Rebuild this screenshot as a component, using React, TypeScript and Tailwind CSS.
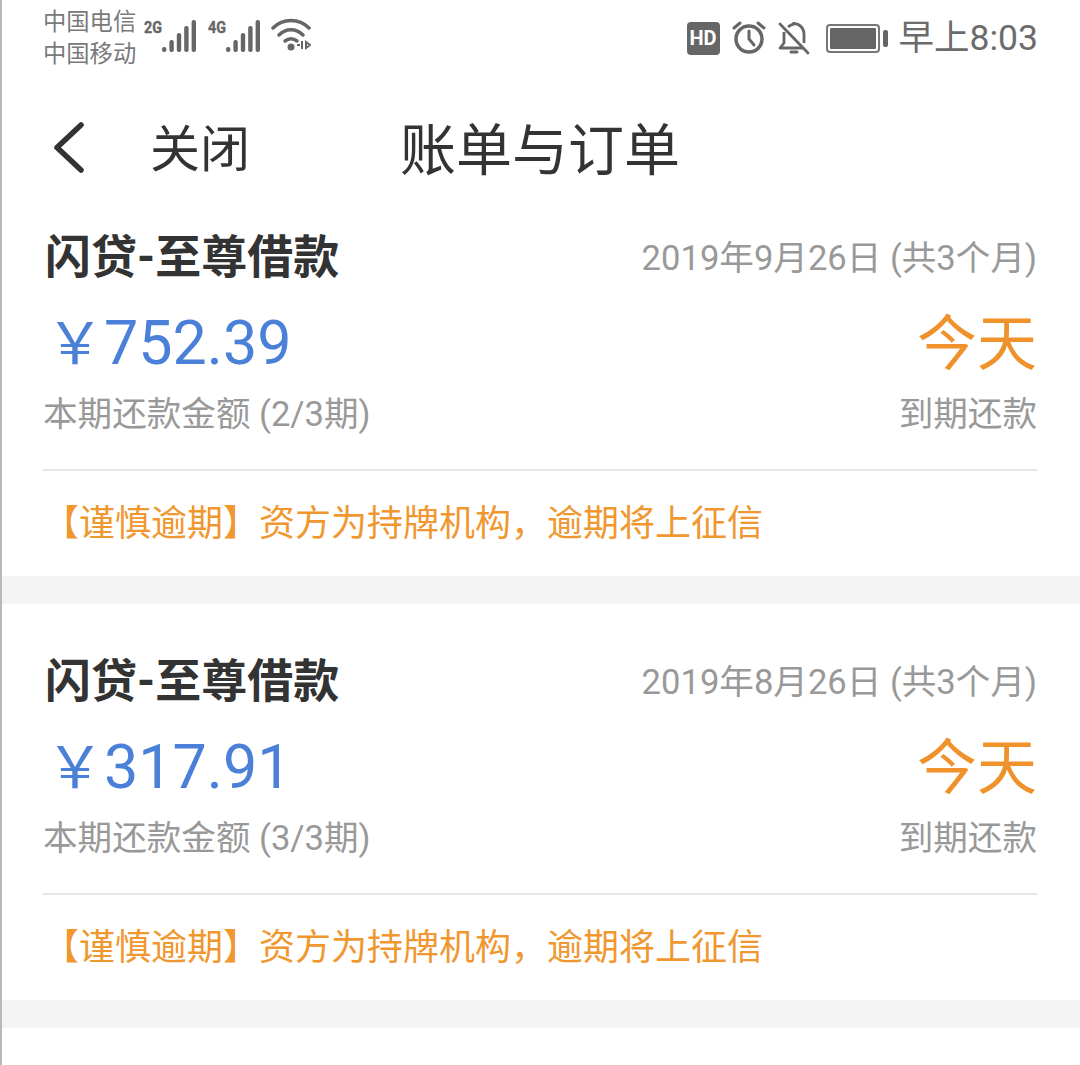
const font = { cn: "font-['Roboto','Noto_Sans_CJK_SC',sans-serif]" };

function Signal({ label }: { label: string }) {
  const heights = [5, 12, 19, 26, 32];
  return (
    <svg width="54" height="36" viewBox="0 0 54 36" className="block">
      <text x="0" y="15" fontSize="17" fontWeight="700" fontFamily="Roboto, sans-serif" fill="#666" stroke="#666" strokeWidth="0.4" textLength="18" lengthAdjust="spacingAndGlyphs">
        {label}
      </text>
      {heights.map((h, i) => (
        <rect key={i} x={18 + i * 7.4} y={34 - h} width="4.4" height={h} rx="2" fill="#666" />
      ))}
    </svg>
  );
}

function Wifi() {
  return (
    <svg width="40" height="36" viewBox="0 0 40 36" fill="none" className="block">
      <path d="M2 10C12 0 28 0 38 10" stroke="#666" strokeWidth="3.5" strokeLinecap="round" />
      <path d="M8 17C15 10 25 10 32 17" stroke="#666" strokeWidth="3.5" strokeLinecap="round" />
      <path d="M14 23C18 20 22 20 26 23" stroke="#666" strokeWidth="3.5" strokeLinecap="round" />
      <circle cx="20" cy="29" r="3.5" fill="#666" />
      <path d="M31 23V31M29 27L26 27M35 24L39 27L35 30Z" stroke="#666" strokeWidth="2" />
    </svg>
  );
}

function Alarm() {
  return (
    <svg width="34" height="34" viewBox="0 0 34 34" fill="none" className="block">
      <circle cx="17" cy="18" r="13" stroke="#666" strokeWidth="3.5" />
      <path d="M17 10V18L22 24" stroke="#666" strokeWidth="3" strokeLinecap="round" />
      <path d="M2 7L8 2M32 7L26 2" stroke="#666" strokeWidth="3" strokeLinecap="round" />
    </svg>
  );
}

function BellOff() {
  return (
    <svg width="32" height="34" viewBox="0 0 32 34" fill="none" className="block">
      <path d="M6 11V22L2 27H25" stroke="#666" strokeWidth="2.8" strokeLinejoin="round" />
      <path d="M10 6C13 3 18 2 21 4C24 6 26 9 26 13V22" stroke="#666" strokeWidth="2.8" />
      <path d="M13 31H19" stroke="#666" strokeWidth="3" strokeLinecap="round" />
      <path d="M16 1V3" stroke="#666" strokeWidth="3" />
      <path d="M2 3L30 32" stroke="#666" strokeWidth="2.8" strokeLinecap="round" />
    </svg>
  );
}

function Battery() {
  return (
    <div className="flex items-center gap-[3px]">
      <div className="h-[29px] w-[54px] rounded-[4px] border-2 border-[#777] p-[2px]">
        <div className="h-full w-full rounded-[1px] bg-[#666]" />
      </div>
      <div className="h-[17px] w-[5px] rounded-[2px] bg-[#666]" />
    </div>
  );
}

function StatusBar() {
  return (
    <div className="flex h-[73px] items-start justify-between pl-[41px] pr-[42px] pt-[6px]">
      <div className="flex items-start">
        <div className={`${font.cn} text-[23.3px] leading-[32px] text-[#7a7a7a]`}>
          <div>中国电信</div>
          <div>中国移动</div>
        </div>
        <div className="ml-[8px] mt-[12px] flex items-start">
          <Signal label="2G" />
          <div className="ml-[10px]">
            <Signal label="4G" />
          </div>
          <div className="ml-[9px]">
            <Wifi />
          </div>
        </div>
      </div>
      <div className="mt-[14px] flex items-center">
        <div className="flex h-[33px] w-[33px] items-center justify-center rounded-[4px] bg-[#666] font-['Roboto',sans-serif] text-[20px] font-bold text-white">
          HD
        </div>
        <div className="ml-[12px]">
          <Alarm />
        </div>
        <div className="ml-[12px]">
          <BellOff />
        </div>
        <div className="ml-[16px]">
          <Battery />
        </div>
        <div className={`${font.cn} ml-[11px] text-[35.5px] leading-[36px] text-[#6b6b6b]`}>早上8:03</div>
      </div>
    </div>
  );
}

function Header() {
  return (
    <div className="flex h-[142px] items-start pl-[50px]">
      <div className="mt-[49px] w-[98px]">
        <svg width="34" height="52" viewBox="0 0 34 52" fill="none" className="block">
          <path d="M29 3L5 25.5L29 48" stroke="#333" strokeWidth="5.5" strokeLinecap="round" strokeLinejoin="round" />
        </svg>
      </div>
      <div className={`${font.cn} mt-[51px] w-[250px] text-[50px] leading-[52px] text-[#333]`}>关闭</div>
      <div className={`${font.cn} mt-[48px] text-[56px] leading-[60px] text-[#333]`}>账单与订单</div>
    </div>
  );
}

function BillCard({ date, amount, term }: { date: string; amount: string; term: string }) {
  return (
    <div className="pl-[41px] pr-[43px]">
      <div className="flex h-[84px] items-center justify-between pl-[2px]">
        <div className={`${font.cn} text-[46px] font-bold leading-[56px] text-[#333]`}>闪贷-至尊借款</div>
        <div className={`${font.cn} mt-[1px] text-[34.6px] leading-[44px] text-[#999]`}>{date}</div>
      </div>
      <div className="flex h-[84px] items-center justify-between">
        <div className="flex items-baseline pl-[3px] text-[#4a80d8]">
          <span className="w-[58px] font-['Noto_Sans_CJK_SC',sans-serif] text-[58px] leading-[70px]">￥</span>
          <span className="font-['Roboto',sans-serif] text-[61px] leading-[70px]">{amount}</span>
        </div>
        <div className={`${font.cn} mt-[8px] text-[60px] leading-[70px] text-[#f0922b]`}>今天</div>
      </div>
      <div className="flex h-[62px] items-center justify-between">
        <div className={`${font.cn} text-[34.6px] leading-[44px] text-[#999]`}>本期还款金额 ({term}期)</div>
        <div className={`${font.cn} text-[34.6px] leading-[44px] text-[#999]`}>到期还款</div>
      </div>
      <div className="mt-[24px] mb-[1px] h-[2px] bg-[#e6e6e6]" />
      <div className={`${font.cn} flex h-[104px] items-center text-[36px] leading-[44px] text-[#f0972f]`}>
        【谨慎逾期】资方为持牌机构，逾期将上征信
      </div>
    </div>
  );
}

export default function App() {
  return (
    <div className="h-[1065px] w-[1080px] overflow-hidden border-l-2 border-[#b8b8b8] bg-white">
      <StatusBar />
      <Header />
      <BillCard date="2019年9月26日 (共3个月)" amount="752.39" term="2/3" />
      <div className="h-[28px] bg-[#f4f4f4]" />
      <div className="h-[35px]" />
      <BillCard date="2019年8月26日 (共3个月)" amount="317.91" term="3/3" />
      <div className="h-[28px] bg-[#f4f4f4]" />
    </div>
  );
}
